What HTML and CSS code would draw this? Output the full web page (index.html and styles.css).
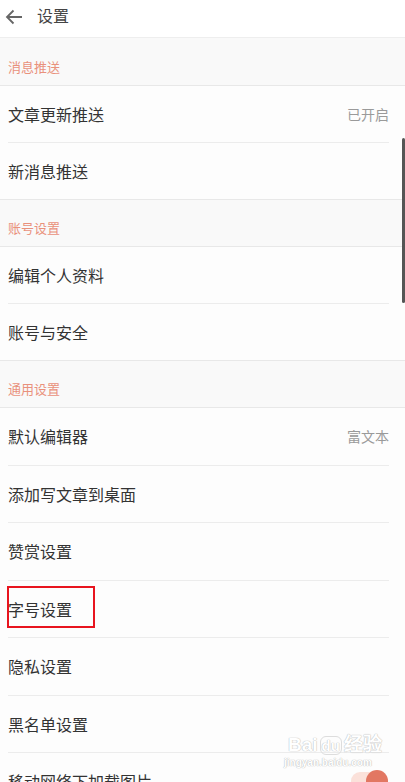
FILE: index.html
```html
<!DOCTYPE html>
<html lang="zh-CN">
<head>
    <meta charset="UTF-8">
    <meta name="viewport" content="width=device-width, initial-scale=1.0">
    <title>设置</title>
    <link rel="stylesheet" href="styles.css">
</head>
<body>
    <div class="page">
        <div class="topbar">
            <svg class="back" width="18" height="16" viewBox="0 0 18 16">
                <path d="M17 8H2M8.5 1.5L2 8l6.5 6.5" fill="none" stroke="#666" stroke-width="1.8"/>
            </svg>
            <span class="title">设置</span>
        </div>

        <div class="group-title first">消息推送</div>
        <div class="row"><span>文章更新推送</span><span class="value">已开启</span></div>
        <div class="row last"><span>新消息推送</span></div>

        <div class="group-title">账号设置</div>
        <div class="row"><span>编辑个人资料</span></div>
        <div class="row last"><span>账号与安全</span></div>

        <div class="group-title">通用设置</div>
        <div class="row tall"><span>默认编辑器</span><span class="value">富文本</span></div>
        <div class="row tall"><span>添加写文章到桌面</span></div>
        <div class="row tall"><span>赞赏设置</span></div>
        <div class="row tall"><span>字号设置</span><span class="mark"></span></div>
        <div class="row tall"><span>隐私设置</span></div>
        <div class="row tall"><span>黑名单设置</span></div>
        <div class="row tall"><span>移动网络下加载图片</span><span class="toggle"><span class="knob"></span></span></div>

        <div class="scrollbar"></div>
        <div class="watermark">
            <div class="wm-logo">Bai<span class="wm-du">du</span>经验</div>
            <div class="wm-url">jingyan.baidu.com</div>
        </div>
    </div>
</body>
</html>
```

FILE: styles.css
```css
body { margin: 0; background: #fdfdfd; font-family: "Noto Sans CJK SC", "Noto Sans", sans-serif; color: #333; }
.page { position: relative; width: 405px; height: 782px; overflow: hidden; }

.topbar { height: 37px; display: flex; align-items: center; gap: 14px; padding-left: 5px; border-bottom: 1px solid #eeeeee; background: #fff; }
.back { margin-top: -4px; }
.title { font-size: 16px; color: #444; margin-top: -7px; }

.group-title { height: 48px; padding: 9px 8px 0; box-sizing: border-box; display: flex; align-items: center; font-size: 13px; color: #e9917c; background: #f9f9f9; border-top: 1px solid #e8e8e8; border-bottom: 1px solid #e8e8e8; }
.group-title.first { border-top: none; }

.row { position: relative; height: 56px; display: flex; align-items: center; justify-content: space-between; margin: 0 16px 0 8px; font-size: 16px; color: #333; border-bottom: 1px solid #ececec; }
.row.tall { height: 56.5px; }
.row.last { border-bottom: none; }
.value { font-size: 14px; color: #9a9a9a; }

.mark { position: absolute; left: -1px; top: 5px; width: 84px; height: 38px; border: 2px solid #e8141e; }

.toggle { position: relative; width: 34px; height: 18px; border-radius: 9px; background: #fbe1da; margin-right: 4px; }
.knob { position: absolute; right: -3px; top: -2px; width: 22px; height: 22px; border-radius: 50%; background: #e27762; }

.scrollbar { position: absolute; right: 0; top: 138px; width: 3px; height: 165px; border-radius: 2px; background: #555; }

.watermark { position: absolute; left: 288px; top: 734px; font-family: "Liberation Sans", Arial, sans-serif; color: #fff; text-shadow: 0 0 1px #bbb, 0 0 1px #bbb; }
.wm-logo { font-size: 19px; font-weight: bold; line-height: 22px; }
.wm-du { font-size: 15px; border: 1px solid #ddd; border-radius: 6px; padding: 0 1px; margin: 0 2px; }
.wm-url { font-size: 10px; font-weight: bold; line-height: 12px; margin-left: -4px; }
```
